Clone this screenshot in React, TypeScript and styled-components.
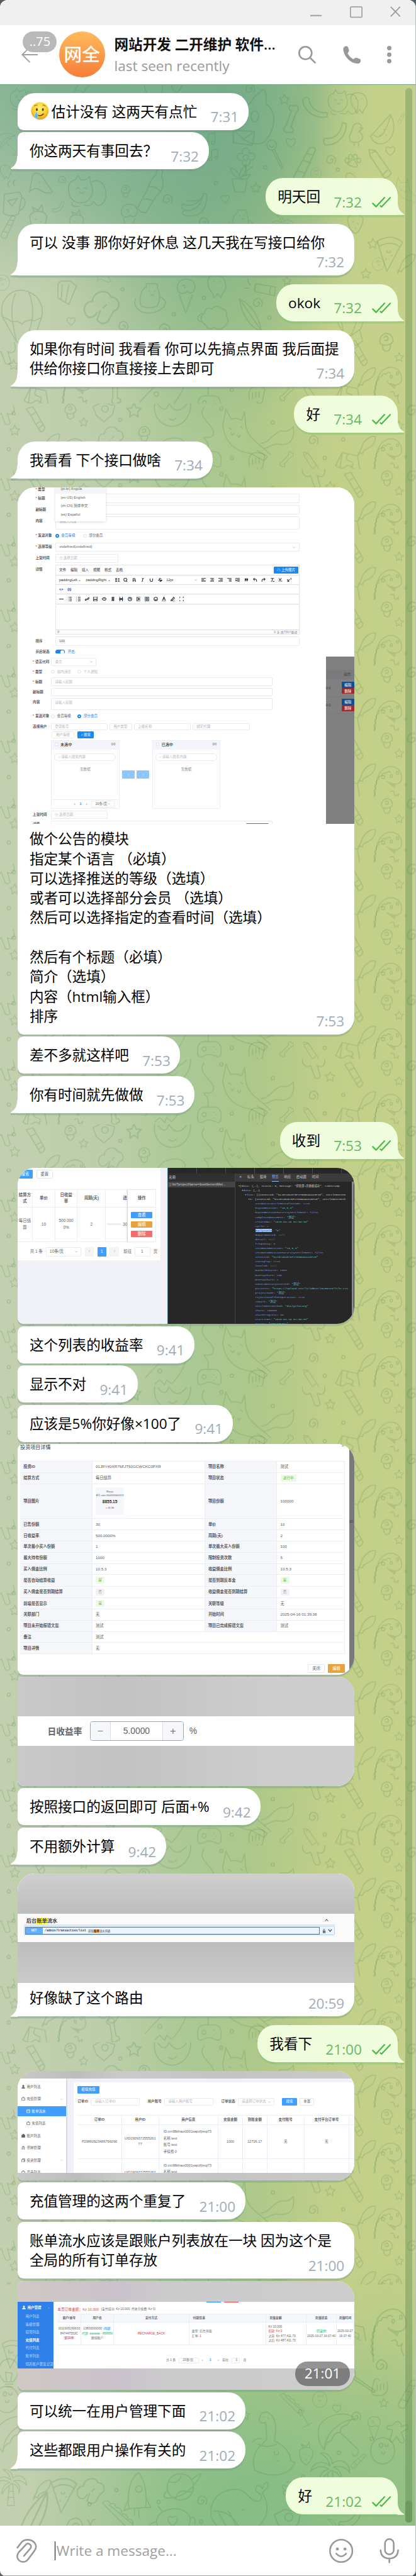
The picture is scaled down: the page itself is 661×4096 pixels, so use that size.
import React from 'react';
import styled, { createGlobalStyle, css } from 'styled-components';

const Global = createGlobalStyle`
  html, body { margin: 0; padding: 0; background: #545c64; }
  * { box-sizing: border-box; }
`;

const SANS = `'Open Sans', 'Noto Sans CJK SC', sans-serif`;
const UI = `'Liberation Sans', 'Noto Sans CJK SC', sans-serif`;
const MONO = `'Liberation Mono', 'Noto Sans CJK SC', monospace`;

/* ---------- window ---------- */

const Viewport = styled.div`
  width: 661px;
  height: 4096px;
  overflow: hidden;
`;

const Window = styled.div`
  zoom: 0.868594;
  width: 761px;
  height: 4716px;
  display: flex;
  flex-direction: column;
  overflow: hidden;
  border-radius: 14px 14px 10px 10px;
  border-right: 1px solid #b9bdb9;
  background: #fff;
  font-family: ${SANS};
  color: #000;
`;

const TitleBar = styled.div`
  flex: none;
  height: 46px;
  padding: 12px 27px 0 0;
  display: flex;
  justify-content: flex-end;
  gap: 51px;
  background: #f0f0f0;
`;

const Header = styled.header`
  flex: none;
  height: 108px;
  display: flex;
  align-items: center;
  padding: 0 44px 0 39px;
`;

const BackSlot = styled.div`
  position: relative;
  width: 69px;
  height: 84px;
  display: flex;
  align-items: center;
`;

const UnreadBadge = styled.span`
  position: absolute;
  left: 3px;
  top: 0;
  width: 62px;
  height: 38px;
  border-radius: 19px;
  background: #b9b9b9;
  color: #fff;
  font-size: 23px;
  line-height: 37px;
  text-align: center;
`;

const Avatar = styled.div`
  width: 84px;
  height: 84px;
  border-radius: 50%;
  background: linear-gradient(#ffba5c, #f67d38);
  color: #fff;
  font-size: 33px;
  font-weight: 500;
  line-height: 84px;
  text-align: center;
`;

const Peer = styled.div`
  flex: 1;
  margin-left: 17px;
  white-space: nowrap;
`;

const PeerName = styled.div`
  font-size: 26px;
  font-weight: 600;
  line-height: 36px;
  margin-top: 2px;
  color: #111;
`;

const PeerStatus = styled.div`
  font-size: 26px;
  line-height: 36px;
  margin-top: 4px;
  color: #999;
`;

const HeaderIcons = styled.div`
  display: flex;
  align-items: center;
  gap: 48px;
`;

const Composer = styled.footer`
  flex: none;
  height: 92px;
  display: flex;
  align-items: center;
  padding: 0 30px 0 30px;
  border-bottom: 1px solid #a5a5a5;
`;

const Placeholder = styled.div`
  flex: 1;
  margin-left: 32px;
  padding-left: 2px;
  border-left: 2px solid #000;
  height: 35px;
  line-height: 34px;
  font-size: 26px;
  color: #a0a0a0;
`;

/* ---------- chat ---------- */

const Chat = styled.main`
  position: relative;
  flex: 1;
  overflow: hidden;
  border-top: 1px solid #6ea57a;
  background:
    radial-gradient(ellipse 420px 420px at 470px 100%, rgba(136, 189, 133, 1) 20%, rgba(136, 189, 133, 0) 100%),
    radial-gradient(ellipse 300px 500px at 760px 100%, rgba(146, 190, 130, 0.9) 0%, rgba(146, 190, 130, 0) 100%),
    linear-gradient(90deg, rgba(197, 209, 139, 0) 76%, rgba(197, 209, 139, 1) 94%) 0 0 / 100% 700px no-repeat,
    radial-gradient(ellipse 500px 380px at 140px 0, rgba(122, 174, 142, 0.95) 10%, rgba(122, 174, 142, 0) 100%),
    radial-gradient(ellipse 330px 640px at 380px 0, rgba(113, 170, 131, 1) 10%, rgba(113, 170, 131, 0) 100%),
    linear-gradient(90deg, #c3d0b0 0%, #bccea9 26%, #aac894 46%, #aec88a 62%, #c2cf89 80%, #c5d18a 100%);
`;

const Wallpaper = styled.svg`
  position: absolute;
  inset: 0;
  fill: none;
  stroke: rgba(70, 125, 70, 0.2);
  stroke-width: 2;
  stroke-linecap: round;
  stroke-linejoin: round;
`;

const Track = styled.div`
  position: absolute;
  right: 6px;
  top: 6px;
  bottom: 6px;
  width: 12px;
  border-radius: 6px;
  background: rgba(78, 122, 66, 0.32);
  display: flex;
  align-items: flex-end;
`;

const Thumb = styled.div`
  width: 12px;
  height: 40px;
  border-radius: 6px;
  background: #6c9a5d;
`;

const History = styled.div`
  position: relative;
  display: flex;
  flex-direction: column;
  gap: 16px;
  padding: 15px 32px 0;
`;

const Group = styled.section<{ $out?: boolean }>`
  display: flex;
  flex-direction: column;
  gap: 4px;
  align-items: ${p => (p.$out ? 'flex-end' : 'flex-start')};
`;

type Shape = { $out?: boolean; $first?: boolean; $last?: boolean };

const corners = css<Shape>`
  border-radius: ${p =>
    p.$out ? '32px 32px 0 32px' : `${p.$first ? 32 : 11}px 32px 32px ${p.$last ? 0 : 11}px`};
`;

const Bubble = styled.article<Shape & { $wide?: boolean }>`
  position: relative;
  display: flex;
  flex-direction: ${p => (p.$wide ? 'column' : 'row')};
  width: ${p => (p.$wide ? '616px' : 'auto')};
  background: ${p => (p.$out ? '#effddd' : '#fff')};
  box-shadow: 0 4px 0 ${p => (p.$out ? 'rgba(120, 195, 110, 0.4)' : 'rgba(110, 150, 135, 0.35)')};
  ${corners}
`;

const TailSvg = styled.svg<{ $out?: boolean }>`
  position: absolute;
  bottom: -4px;
  ${p => (p.$out ? 'right: -12px; transform: scaleX(-1);' : 'left: -12px;')}
`;

const Body = styled.div<{ $caption?: boolean }>`
  padding: ${p => (p.$caption ? '10px' : '16px')} 22px 16px;
  font-size: 26px;
  line-height: 36px;
  white-space: pre;
`;

/* the time sits on the last text line ($lift) or on a line of its own ($drop) */
const Meta = styled.div<{ $out?: boolean; $lift?: boolean; $drop?: boolean }>`
  flex: none;
  display: flex;
  align-items: center;
  align-self: flex-end;
  height: 36px;
  line-height: 36px;
  margin: ${p => (p.$lift ? '-42px' : p.$drop ? '-16px' : 'auto')} ${p => (p.$out ? 13 : 18)}px 6px 2.5px;
  gap: 18px;
  font-size: 26px;
  color: ${p => (p.$out ? '#68b966' : '#a0acb6')};
`;

const Photo = styled.figure<Shape & { $h: number; $inset?: boolean }>`
  position: relative;
  flex: none;
  margin: 0;
  width: 616px;
  height: ${p => p.$h}px;
  overflow: hidden;
  font-family: ${UI};
  font-size: 6.4px;
  color: #606266;
  background: #fff;
  white-space: nowrap;
  ${p =>
    p.$inset
      ? css`border-radius: ${p.$first ? '32px 32px 0 0' : '0'};`
      : css<Shape>`
          ${corners}
        `}
`;

const PhotoShell = styled.div<Shape>`
  box-shadow: 0 4px 0 rgba(110, 150, 135, 0.35);
  ${corners}
`;

const PhotoTime = styled.span`
  position: absolute;
  right: 8px;
  bottom: 8px;
  width: 100px;
  height: 44px;
  border-radius: 22px;
  background: rgba(60, 60, 60, 0.55);
  color: #fff;
  font-family: ${SANS};
  font-size: 26px;
  line-height: 43px;
  text-align: center;
`;

const Tail = ({ out }: { out?: boolean }) => (
  <TailSvg $out={out} width="13" height="28" viewBox="0 0 13 28">
    <path d="M0 22H13V28H0Z" fill={out ? 'rgba(120,195,110,.4)' : 'rgba(110,150,135,.35)'} />
    <path d="M13 0H12C12 11 8 18 0 22.500V24H13Z" fill={out ? '#effddd' : '#fff'} />
  </TailSvg>
);

const Ticks = () => (
  <svg width="35" height="20" viewBox="0 0 35 20" fill="none" stroke="#4fb94b" strokeWidth="2.600" strokeLinecap="round" strokeLinejoin="round">
    <path d="M1.500 12L7.500 18L23 1.500M15.500 16.500L17.500 18.500L33.500 1.500" />
  </svg>
);

const EmojiFace = styled.svg`
  vertical-align: -6px;
  margin: 0 4px 0 3px;
`;

const Emoji = () => (
  <EmojiFace width="33" height="33" viewBox="0 0 33 33">
    <defs>
      <radialGradient id="face" cx=".5" cy=".35" r=".65">
        <stop offset="0" stopColor="#fff27a" />
        <stop offset=".6" stopColor="#fbd12e" />
        <stop offset="1" stopColor="#ec9a1c" />
      </radialGradient>
    </defs>
    <circle cx="16.500" cy="16.500" r="16" fill="url(#face)" />
    <path d="M6 8Q9 5 12 6M21 6Q24 5 27 8" stroke="#a5670f" strokeWidth="1.300" fill="none" />
    <ellipse cx="11" cy="14" rx="1.700" ry="2.600" fill="#5f3a0c" />
    <ellipse cx="22" cy="14" rx="1.700" ry="2.600" fill="#5f3a0c" />
    <path d="M11 23Q17 28 23 22" stroke="#5f3a0c" strokeWidth="1.700" fill="none" strokeLinecap="round" />
    <path d="M10 17Q14 24 13 28Q11 31 8 30Q5 28 7 24Z" fill="#5db8ee" stroke="#d6f1ff" strokeWidth=".6" />
  </EmojiFace>
);

type MsgProps = {
  time: string;
  out?: boolean;
  first?: boolean;
  last?: boolean;
  wide?: boolean;
  wrapTime?: boolean;
  media?: React.ReactNode;
  children: React.ReactNode;
};

const Message = ({ time, out, first, last, wide, wrapTime, media, children }: MsgProps) => (
  <Bubble $out={out} $first={first} $last={last} $wide={wide}>
    {(last || out) && <Tail out={out} />}
    {media}
    <Body $caption={!!media}>{children}</Body>
    <Meta $out={out} $lift={wide && !wrapTime} $drop={wrapTime}>
      {time}
      {out && <Ticks />}
    </Meta>
  </Bubble>
);

/* ---------- wallpaper doodles ---------- */

const shapes: Record<string, React.ReactNode> = {
  star: <path d="M0-10L3-3 10-2 5 3 6 10 0 6-6 10-5 3-10-2-3-3Z" />,
  heart: <path d="M0 10C-15 0-9-13 0-5 9-13 15 0 0 10Z" />,
  dot: <circle r="3" />,
  spiral: <path d="M0 1c2-4 6 0 3 4s-10 3-10-3 5-11 11-8 6 10 3 14" />,
  bone: <path d="M-3-11C-10-11-9-20-3-18 0-23 9-18 4-11L4 11C11 12 10 19 5 18 1 23-8 19-3 11Z" />,
  fish: <path d="M-14 14C-8 10-10 2-4-5 2-13 12-18 17-15 17-6 12 2 4 6-2 9-6 9-7 16L-11 14-15 19Z" />,
  dino: (
    <>
      <path d="M-24 56C-27 20-24-10-8-20 8-30 24-22 26-4 27 8 16 13 4 7M-2 4Q6 14 14 10L12 16 7 11M4 24Q12 20 12 28T20 28Q16 36 22 46" />
      <path d="M-24 46q-6-4-1-9-5-5 0-9-5-5 1-10-4-6 2-9-3-6 4-9-1-7 6-7 1-7 8-4 3-6 9-2" />
      <ellipse cx="6" cy="-6" rx="2" ry="3" /><ellipse cx="18" cy="-12" rx="2" ry="3" />
    </>
  ),
  mushroom: <path d="M-10 2C-12-16 10-18 10 0 6 6-6 7-10 2ZM-6 5C-8 18 8 18 6 4M-4-6q4-5 6 0t-5 4" />,
  torch: <path d="M-16-20L-4-24 2-14-8-8ZM-8-8L10 22Q16 22 18 14L2-14M2 8L10 3M6 16L14 10" />,
  tree: <path d="M-20-20C-24-4-14 4-6-2L2 20Q8 24 12 18L6-2C16 4 24-4 18-18" />,
  broccoli: <path d="M-18 12C-28 2-20-10-12-8-12-22 8-26 12-14 24-14 26 2 16 4L8 18Q0 24-6 16L-2 4M-18 12Q-10 14-6 6M2 0l4-4" />,
  cat: (
    <>
      <path d="M-24-42L-14-22Q-4-26 6-20L12-36 14-12C16 10 34 22 44 30L62 46M-24-42L-30-10C-26 20-10 40 24 44L50 58 56 50 36 38M-14 4l3 5 3-5M-2 8l3 5 3-5M-18-6l4 3M4-8l4 3" />
      <path d="M44 24C60 24 66 4 84 0Q96 4 106-8C110 20 96 30 76 26 66 24 62 32 50 34" />
    </>
  ),
  pad: <path d="M-10-60C-26-40 10-26 8-10S-18-8-8 2-4 18-2 26M-22 52C-26 26-14 24 0 26 14 24 26 26 22 52 16 60 10 50 0 50-10 50-16 60-22 52ZM-14 40a4 4 0 108 0 4 4 0 10-8 0M8 36h1M13 41h1M8 46h1" />,
  hook: <path d="M-14 10Q-18-14 0-14 16-14 14-6T10 14Q4 20 0 14M-8 8V-2M-2 6V-4M4 6V-4" />,
  carton: <path d="M-20 12L-8-12 20-6 24 18M-8-12L-12 16M-20 12Q-8 20-2 14T14 18M2-8Q-4 2 6 4T8 16" />,
  pencil: <path d="M-16-20L-6-18 18 16Q16 22 8 24L-14-10ZM-12-14L-6-18M4 20L12 12" />,
  girl: <path d="M-32 0C-36 26-18 42 0 42S34 26 34 0M-26 2Q-12 20-6 0Q8 24 26 2M-6 28Q2 34 8 26" />,
  camera: <path d="M-20-6L-4-14 20-8 16 8 0 22-14 10ZM-4-2a6 6 0 1012 0 6 6 0 10-12 0" />,
  wing: <path d="M-44 20L-6-20Q30-34 38-12 30 12 10 32L0 24-4 34-14 24-24 32M-18 6a4 4 0 108 0 4 4 0 10-8 0" />,
  note: <path d="M-6 12V-10L8-14V8M-6 12a4 3 0 11-1-4M8 8a4 3 0 11-1-4" />,
  flower: <path d="M0-4a5 5 0 11-1 0M-6-6C-12-18 8-22 6-6 20-12 20 8 7 5 10 20-10 20-6 6-20 10-20-12-6-6M0 12V34M0 26Q10 20 12 16" />,
  pot: <path d="M-14-4H14L10 20H-8ZM0-4C-14-10-16-20-16-24-6-22 0-14 0-4 0-16 4-24 12-28 12-16 6-8 0-4 8-12 16-12 20-12 16-2 8-2 0-4" />,
  melon: <path d="M-22 12L14-28C28-4 18 26-6 26Q-18 24-22 12ZM-16 10Q0 24 14-24M2 0h1M6 10h1M-6 10h1" />,
  bottle: <path d="M12-42L20-40 18-26Q26-8 8 8L-8 34Q-18 36-22 26L-6-4Q0-22 8-28ZM-4-8Q8-12 16 0M-12 12Q-4 10 4 16" />,
  banana: <path d="M18-22L24-20C26 10 8 26-18 18-22 14-20 10-16 10 6 12 16-4 18-22ZM18-18C8 0-8 4-20-2L-22 4Q-18 10-12 10M14-10Q2-6-12-8" />,
  catface: <path d="M-24 6C-28-16-14-18-12-18L-8-26-2-18H6L14-24 16-12C26 8 12 24-2 24-14 24-22 16-24 6ZM18-14C40-26 50 8 40 22Q30 36 22 22M-10-2q3-4 5 0M4-2q3-4 5 0M-4 4q4 5 8 0M-18 24q-2 8 12 6M4 28q14 4 16-6" />,
  mug: <path d="M-16-14L12-18 16-10 10 22Q-8 30-18 20ZM15-8Q26-4 20 8T11 12M-10-2L8-6-2 8ZM-8-28q-4-6 2-10M2-30q-4-6 2-10" />,
  onigiri: <path d="M-20 16L-14-16Q-6-22 2-14L22 16Q10 22-4 10-14 8-20 16ZM-10-6h1M-2-2h1" />,
  alien: <path d="M8-40Q14-50 18-38L18-22C36-8 34 20 14 40Q-8 46-22 30M-30-6Q-24-20-8-22L0-34 8-40M-6-2a6 9 0 1012 0 6 9 0 10-12 0M-34 20L0 22-4 44-34 40ZM-34 20L-18 34 0 22" />,
  icecream: <path d="M-14-4C-20-16-10-28 2-26 16-26 20-12 14-4Q8 2 2-4-6 4-14-4ZM-12 2L0 36 12 2M-6-14q6-4 4 4" />,
  sheep: <path d="M-20 8Q-26-2-16-8-14-20-2-16 6-26 16-16 28-14 24-2 32 8 22 14 14 26 2 18-8 24-12 16ZM-20 8Q-30 6-28-2L-20-8M-22 0h1" />,
  balloon: <path d="M-38-6C-44-36-22-56 0-54 26-50 40-28 34-4L22 30 2 44-12 40ZM-14-48C-26-20-18 10-12 40M10-52C24-20 18 10 2 44M-38-6Q-28-2-20 4-10 0-2 8 8-2 20 2L34-4M-4 46L12 64 26 54 20 32" />,
  popcorn: <path d="M-16-20Q-12-30-2-26 8-30 12-22L18-18 4 16-16 4ZM-8-20L-10 6M4-20L-2 12" />,
  bear: <path d="M-26 4Q-32 18-14 28 10 34 26 18 34 6 18 0M-16 16C-22-6-10-18-6-18Q-8-26-2-24L8-24Q16-26 14-16 22 0 14 16 0 24-16 16ZM-2-10h1M8-10h1M2-4q3 3 5 0" />,
  feather: <path d="M-16-28C4-20 20 4 24 30 4 26-12 0-16-28ZM-16-28L24 30" />,
  firework: <path d="M-16-8L20-2 18 14-18 6ZM-16-8Q-20 0-18 6M12-4Q8 4 10 12M-26-6q-6-4-4-10M-30 0h-6" />,
  octo: <path d="M-16-12C-14-26 14-26 16-8Q20 4 12 10L8 20 2 12-4 20-8 10Q-16 4-16-12ZM-6-10h1M6-10h1" />,
  paw: <path d="M-6 6Q0-4 6 6T0 12-6 6ZM-10-2a3 4 0 101 0M-4-8a3 4 0 101 0M4-8a3 4 0 101 0M10-2a3 4 0 101 0" />,
  duck: <path d="M-4-16a8 8 0 1110 10Q16-2 12 8 4 16-8 12-14 4-8-4ZM8-14L14-12 8-9M-2 14V20M6 14V20" />,
  ribbon: <path d="M-14 18C0 20 18 8 18-14L12-16C10 2-2 10-14 8Q-20 12-14 18Z" />,
  candle: <path d="M-16 20L8-24Q14-28 18-22L-4 26Q-12 28-16 20ZM-10 10L2 14M-2-6L10-2M4-16L14-14" />,
  lolly: <path d="M-12-12a9 9 0 1018 0 9 9 0 10-18 0M-7-12a4 4 0 108 0M2-4L18 30 15 31-2-3" />,
  umbrella: <path d="M-36-20C-20-46 20-50 34-34Q22-34 18-22 6-22 4-8-8-8-12 8-24 10-26 26-42 8-36-20ZM34-34C16-34-24-16-26 26M4-8L38 24Q42 30 36 36T28 32" />,
  whale: <path d="M-50 20C-54-20-20-34 4-28 20-22 24-4 38-8 48-14 40-22 32-26 30-38 40-40 44-30 46-44 56-46 54-34 50-28 44-26 44-22 58 0 54 26 34 40 4 56-40 52-50 20ZM-46 10Q-10 10 4 46M-36 14Q-22 38-20 44M6 8h4M-18 11Q-4 34-2 46" />,
  nessie: <path d="M-32 40C-44 0-10-8-10-20L-12-48Q-22-44-24-52-22-70-8-66 8-58 6-30L4-14C22-6 34 10 34 22L42 26 34 38Q8 58-32 40ZM-36-12Q-30-20-20-18M-26-8Q-10 0 8-8M-16-58h1M-8-56h1M4 6a4 4 0 107 0M10 22h1" />,
  palm: <path d="M0-8C-20-24-34-8-36 2-24-10-10-8-2-2-16 0-22 14-20 24-14 10-4 4 2 0 14 2 20 12 18 22 26 8 14-4 6-6 22-10 30-4 36 4 34-20 14-22 4-12 4-26-8-34-18-32-8-26-2-18 0-8ZM-4 4L-8 50H8L4 2M-6 18H5M-7 32H6" />,
  ginger: <path d="M-6-14a7 7 0 1114 4L18-14Q24-8 16-4L8 0 14 16Q10 24 4 16L0 8-8 18Q-16 16-10 6L-8-4-18-6Q-20-14-10-12Z" />,
  rocket: <path d="M-14 26C-20-8-8-34 4-40 16-24 20 4 16 24ZM-2-10a6 6 0 1012 0 6 6 0 10-12 0M-14 6L-24 30-14 26M16 4L26 24 16 24M-4 26V38M4 26V42" />,
  planet: <path d="M-24 0a24 24 0 1048 0 24 24 0 10-48 0M-22-10Q-4-2 2-22M-8 22Q-6 4 10 8T23 4M-24 6Q-40 24-14 20T30-10 22-14" />,
  snail: <path d="M-30 24Q0 34 28 20M-16 20C-24 0-4-14 8-2 16 10 4 24-6 16-14 6 0-2 4 6M10 22L26 6Q28-6 34-4M26 6L20-4" />,
  turtle: <path d="M-30 0C-28-26 20-34 32-8 36 18-4 34-24 18ZM0 8C-14-4-8-14 0-8 8-14 14-4 0 8ZM-30 0Q-46 4-42 12T-24 18M32-8Q44-10 40 4M-20-20l-6-8M20 20l8 8" />,
  cone: <path d="M-34-34L20 20M-20-30L28 10M-34-34Q-24-44-18-32-8-36-6-24 4-26 6-12 16-12 18-2 30 0 28 10L20 20M24 16L40 44 26 50M40 44L50 38" />,
  bulb: <path d="M-8 20C-28-2-14-24 2-22 20-20 22 4 8 20ZM-6 24H8M-4 29H6M-4 18L-6 2 6 4 4 18M-24-22l-5-6M0-32v-7M24-20l5-5" />,
  pizza: <path d="M-20-18Q4-32 22-16L-4 32ZM-16-10Q4-20 18-8M-4-2a3 3 0 106 0M4 6h1M-6 12h1" />,
  ball: <path d="M-22 0a22 24 0 1044 0 22 24 0 10-44 0M-6-10a3 4 0 106 0 3 4 0 10-6 0M4-12a3 4 0 106 0M-2 2a3 4 0 106 0" />,
  strawberry: <path d="M-14-6C-8-16 8-16 14-6 14 8 6 20 0 22-8 18-14 8-14-6ZM-6-12L-10-20 0-15 6-24 8-12M-5 0h1M4 4h1M0 12h1" />,
};

type Doodle = [string, number, number, number?, number?];

const band: Doodle[] = [
  ['torch', 64, 30], ['camera', 190, 12], ['star', 245, 12, 1.3], ['star', 153, 34, 0.8], ['star', 27, 49, 0.9],
  ['girl', 315, 0], ['broccoli', 203, 64], ['mushroom', 264, 55, 1], ['fish', 92, 72], ['dino', 132, 88, 0.95],
  ['wing', 305, 86, 0.9], ['cat', 436, 50, 0.95], ['pad', 383, 64, 0.95], ['bone', 524, 102, 0.8, 45],
  ['hook', 470, 104], ['pencil', 568, 105, 0.8], ['carton', 634, 102], ['star', 604, 32, 0.9], ['spiral', 573, 66],
  ['torch', 646, 30], ['tree', 574, 14], ['mushroom', 708, 16, 1], ['star', 730, 40, 0.8], ['fish', 670, 76],
  ['dino', 710, 88, 0.95], ['spiral', 754, 12, 1.2], ['mushroom', 129, 14], ['tree', 8, 20, 0.9], ['dot', 220, 30],
  ['dot', 499, 35], ['dot', 424, 100], ['dot', 594, 100], ['dot', 16, 84], ['dot', 701, 84], ['dot', 25, 18],
  ['dot', 628, 66], ['dot', 405, 10], ['dot', 742, 98, 0.7], ['carton', 62, 104], ['bone', 206, 98, 1.1, -10],
];

const upper: Doodle[] = [
  ['ribbon', 70, 96, 1], ['catface', 36, 24, 0.7], ['bottle', 150, 0, 0.9], ['heart', 323, 4, 1], ['octo', 280, 8],
  ['spiral', 457, 6], ['alien', 466, 60, 1.15], ['star', 520, 26, 0.9], ['ribbon', 578, 40, 1.2, 80], ['bone', 532, 62, 1.3, 20],
  ['catface', 620, 30, 0.8], ['octo', 656, 34, 0.9], ['melon', 700, 82, 1], ['duck', 650, 92, 1], ['ribbon', 612, 88, 1.2],
  ['note', 386, 100, 0.9], ['note', 392, 128, 0.8], ['heart', 532, 105, 0.9], ['flower', 450, 132, 1], ['lolly', 500, 122, 1],
  ['candle', 556, 145, 1.2], ['spiral', 605, 136], ['paw', 645, 136, 1.1], ['pencil', 694, 142, 1.2], ['heart', 714, 120, 0.9],
  ['pot', 438, 176, 1], ['bottle', 276, 196, 1.1], ['catface', 150, 192, 1], ['onigiri', 74, 180, 1], ['mug', 24, 214, 1],
  ['spiral', 113, 173, 0.8], ['mushroom', 230, 194, 0.8], ['banana', 354, 220, 1], ['heart', 412, 208, 0.8], ['star', 468, 188, 0.9],
  ['dot', 395, 180], ['dot', 485, 151], ['dot', 618, 155], ['spiral', 306, 208, 1], ['ball', 578, 162, 0.45], ['strawberry', 70, 246, 1.1],
  ['strawberry', 140, 250, 0.9], ['strawberry', 650, 250, 1], ['onigiri', 645, 176, 0.8], ['cat', 740, 190, 0.5], ['icecream', 236, 242, 0.9],
  ['bear', 440, 248, 0.8], ['spiral', 372, 250], ['ribbon', 106, 222, 0.6], ['palm', 516, 258, 0.6], ['candle', 14, 260, 0.8],
  ['feather', 340, 130, 0.9, 190], ['umbrella', 10, 110, 0.5], ['octo', 10, 160, 0.6], ['candle', 734, 60, 0.4],
  ['star', 682, 290, 0.9], ['pizza', 712, 306, 1.1], ['ball', 692, 328, 0.5], ['star', 669, 345, 0.9], ['fish', 742, 326],
  ['balloon', 42, 430, 1], ['popcorn', 122, 386, 1], ['broccoli', 186, 408, 1.4], ['bear', 274, 388, 1], ['icecream', 340, 382, 1],
  ['octo', 396, 370, 1], ['firework', 484, 372, 1], ['star', 525, 358, 0.8], ['feather', 454, 420, 1], ['sheep', 390, 426, 1],
  ['spiral', 471, 398], ['spiral', 225, 440], ['heart', 130, 432, 0.8], ['dot', 224, 374], ['dot', 373, 390], ['dot', 318, 420],
  ['dot', 493, 426], ['spiral', 300, 446, 1.2], ['balloon', 640, 420, 0.9], ['mushroom', 707, 470, 1.2], ['star', 730, 498, 0.8],
  ['torch', 654, 492, 1], ['fish', 670, 534], ['dino', 710, 540, 0.95], ['star', 25, 512, 0.9], ['tree', 8, 490], ['carton', 64, 566],
  ['dino', 140, 550, 0.95], ['bone', 210, 560, 1.2], ['wing', 300, 560, 1], ['pad', 383, 546, 0.9], ['bone', 524, 564, 0.8, 45],
  ['hook', 470, 566], ['carton', 634, 562], ['pencil', 568, 566, 0.8], ['dot', 424, 558], ['ball', 4, 362, 0.6], ['onigiri', 190, 350, 0.6],
];

const lower: Doodle[] = [
  ['dino', 712, 80, 1.2], ['spiral', 697, 152, 1.2], ['carton', 645, 90, 1], ['hook', 694, 195, 1, 180], ['ball', 585, 216, 0.6],
  ['lolly', 650, 180, 1.2, -30], ['star', 702, 222, 0.8], ['candle', 744, 206, 1], ['spiral', 651, 246], ['heart', 616, 232, 0.8],
  ['icecream', 684, 266, 0.7], ['ginger', 726, 276, 1], ['umbrella', 618, 284, 0.95], ['ball', 700, 310, 1], ['nessie', 498, 306, 1],
  ['strawberry', 560, 316, 0.9], ['palm', 604, 346, 1], ['candle', 655, 328, 0.6, 20], ['cone', 536, 232, 0.7], ['dot', 549, 238],
  ['dot', 620, 314], ['dot', 680, 288], ['pizza', 696, 384, 0.9], ['fish', 646, 392, 0.8], ['ball', 12, 216, 1], ['bulb', 16, 164, 1],
  ['umbrella', 30, 288, 0.95], ['pizza', 22, 130, 0.9], ['palm', 20, 370, 0.8], ['fish', 76, 380, 1], ['pizza', 116, 388, 1.1],
  ['broccoli', 166, 384, 1.1], ['rocket', 250, 390, 1], ['planet', 330, 376, 1], ['whale', 436, 410, 1], ['banana', 536, 374, 0.9],
  ['spiral', 369, 400], ['cone', 218, 436, 0.9], ['turtle', 316, 440, 1], ['snail', 140, 440, 1], ['feather', 60, 430, 1.6, 60],
  ['strawberry', 194, 472, 1], ['camera', 526, 434, 1.2], ['ribbon', 640, 430, 1.2], ['dot', 164, 408], ['dot', 368, 440],
  ['dot', 290, 404], ['dot', 213, 382], ['ball', 472, 470, 0.8], ['palm', 612, 458, 0.7], ['star', 448, 244, 0.9], ['snail', 560, 456, 0.6],
];

const Doodles = ({ items }: { items: Doodle[] }) => (
  <>
    {items.map(([name, x, y, s = 1, r = 0], i) => (
      <g key={i} transform={`translate(${x} ${y}) rotate(${r}) scale(${s})`}>{shapes[name]}</g>
    ))}
  </>
);

const ChatWallpaper = () => (
  <Wallpaper width="761" height="4470" viewBox="0 0 761 4470">
    <defs>
      <pattern id="band" width="761" height="120" patternUnits="userSpaceOnUse" y="583">
        <Doodles items={band} />
      </pattern>
    </defs>
    <svg width="761" height="583"><Doodles items={upper} /></svg>
    <rect y="583" width="761" height="3444" fill="url(#band)" stroke="none" />
    <svg y="4021" width="761" height="450"><Doodles items={lower} /></svg>
  </Wallpaper>
);

/* ---------- shared pieces of the attached admin screens ---------- */

const Col = styled.div<{ $pad?: string; $w?: number; $bg?: string }>`
  display: flex;
  flex-direction: column;
  padding: ${p => p.$pad || 0};
  width: ${p => (p.$w ? `${p.$w}px` : 'auto')};
  background: ${p => p.$bg || 'transparent'};
`;

const Line = styled.div<{ $h: number; $gap?: number; $mb?: number; $ml?: number; $top?: boolean }>`
  flex: none;
  display: flex;
  align-items: ${p => (p.$top ? 'flex-start' : 'center')};
  height: ${p => p.$h}px;
  line-height: 8px;
  gap: ${p => p.$gap || 0}px;
  margin-bottom: ${p => p.$mb || 0}px;
  margin-left: ${p => p.$ml || 0}px;
`;

const Label = styled.div<{ $w: number; $req?: boolean; $mt?: number }>`
  flex: none;
  width: ${p => p.$w}px;
  margin-top: ${p => p.$mt || 0}px;
  font-weight: 700;
  color: #55585d;
  &::before {
    content: '*';
    display: ${p => (p.$req ? 'inline' : 'none')};
    color: #f04848;
    margin-right: 2px;
  }
`;

const Box = styled.div<{ $w: number; $h?: number; $tall?: boolean; $pill?: boolean; $dark?: boolean }>`
  flex: none;
  width: ${p => p.$w}px;
  height: ${p => (p.$h ? `${p.$h}px` : '100%')};
  display: flex;
  align-items: ${p => (p.$tall ? 'flex-start' : 'center')};
  justify-content: space-between;
  padding: ${p => (p.$tall ? '4px 6px 0' : '0 6px')};
  border: 1px solid #e9eaee;
  border-radius: ${p => (p.$pill ? 8 : 1.5)}px;
  color: ${p => (p.$dark ? '#606266' : '#b4b7be')};
`;

const Btn = styled.div<{ $w: number; $h: number; $c?: string }>`
  flex: none;
  width: ${p => p.$w}px;
  height: ${p => p.$h}px;
  display: flex;
  align-items: center;
  justify-content: center;
  border-radius: 1.500px;
  color: ${p => (p.$c ? '#fff' : '#606266')};
  background: ${p => p.$c || '#fff'};
  border: ${p => (p.$c ? '0' : '1px solid #e4e6eb')};
`;

const Radio = styled.span<{ $on?: boolean }>`
  display: inline-block;
  width: 7px;
  height: 7px;
  border-radius: 50%;
  background: #fff;
  border: ${p => (p.$on ? '2.500px solid #1888f5' : '1px solid #dfe2e8')};
  margin-right: 4px;
`;

const Tint = styled.span<{ $c: string; $b?: boolean }>`
  color: ${p => p.$c};
  font-weight: ${p => (p.$b ? 700 : 400)};
`;

const Spacer = styled.i`
  flex: 1;
`;

const Chevron = ({ up, s = 5, c = '#b4b7be' }: { up?: boolean; s?: number; c?: string }) => (
  <svg width={s} height={s} viewBox="0 0 10 10" fill="none" stroke={c} strokeWidth="1.600">
    <path d={up ? 'M1 8L5 3L9 8' : 'M1 2.500L5 7.500L9 2.500'} />
  </svg>
);

/* ---------- notice form, first attachment ---------- */

const LanguageMenu = styled.div`
  position: absolute;
  left: 69px;
  top: -4px;
  width: 93px;
  height: 66px;
  background: #fff;
  box-shadow: 0 1px 5px rgba(0, 0, 0, 0.14);
  display: flex;
  flex-direction: column;
`;

const LanguageItem = styled.div<{ $on?: boolean }>`
  flex: none;
  height: 15.700px;
  line-height: 15.700px;
  padding-left: 10px;
  background: ${p => (p.$on ? '#f3f5f9' : '#fff')};
`;

const Editor = styled.div`
  width: 447px;
  height: 128px;
  border: 1px solid #e6e6e6;
  display: flex;
  flex-direction: column;
  color: #222f3e;
`;

const EditorBar = styled.div<{ $h: number }>`
  flex: none;
  height: ${p => p.$h}px;
  padding: 0 1px 0 6px;
  display: flex;
  align-items: center;
  gap: 8px;
  border-bottom: 1px solid #dcdcdc;
`;

const Tool = styled.svg`
  flex: none;
  width: 8px;
  height: 8px;
  margin-right: -0.300px;
  fill: none;
  stroke: #222f3e;
  stroke-width: 1.500;
`;

const toolA = [
  'M2 1V9M0 3L2 1 4 3M0 7L2 9 4 7M6 2H10M6 5H10M6 8H10', 'M1 4a3.500 3.500 0 107 0 3.500 3.500 0 10-7 0M7 7L10 10',
  'M2 1V9H6Q8 9 8 7T6 5H2M2 1H5Q7 1 7 3T5 5', 'M6 1L4 9M4 1H8M2 9H6', 'M2 1V5Q2 8 5 8T8 5V1M2 10H8', 'M8 2Q3 0 3 3T7 6 3 9M0 5H10',
];
const toolB = [
  'M0 1H10M0 4H6M0 7H10M0 10H6', 'M0 1H10M2 4H8M0 7H10M2 10H8', 'M0 1H10M4 4H10M0 7H10M4 10H10', 'M0 1H10M4 4H10M4 7H10M0 10H10',
  'M0 1H10M4 4H10M4 7H10M0 10H10M0 4L3 5.500 0 7', 'M2 2V5H4V2ZM6 2V5H8V2ZM3 6L2 8M7 6L6 8', 'M4 0L1 3 4 6M1 3H6Q9 4 8 9',
  'M6 0L9 3 6 6M9 3H4Q1 4 2 9', 'M2 1H9M6 1L4 8M0 9H5M7 7L10 10M10 7L7 10', 'M0 1L6 8M6 1L0 8M8 7H10V10H8', 'M0 3L6 10M6 3L0 10M8 0H10V3H8',
];
const toolC = [
  'M0 5H10', 'M0 1H1M3 1H10M0 5H1M3 5H10M0 9H1M3 9H10', 'M0 1H1M4 1H10M0 5H1M4 5H10M0 9H1M4 9H10', 'M4 6L8 2Q10 1 9 4L6 7M6 4L2 8Q0 9 1 6L3 4',
  'M1 0H9V10H1ZM1 8L4 5 6 7 9 4', 'M0 5Q5-1 10 5 5 11 0 5ZM4 5H6', 'M3 0H7V9L5 7 3 9ZM5 1V7', 'M2 0V4H8V0M2 10V6H8V10M0 5H10', 'M1 5a4 4 0 108 0 4 4 0 10-8 0M5 2V5H7',
  'M1 0H9V10H1ZM4 3V7L7 5Z', 'M0 1H10V9H0ZM0 5H10M5 1V9', 'M1 5a4 4 0 108 0 4 4 0 10-8 0M3 6Q5 8 7 6', 'M2 8L5 0 8 8M3 5H7M0 10H10', 'M1 8L7 1 9 3 4 8ZM0 10H10',
  'M0 3V0H3M7 0H10V3M10 7V10H7M3 10H0V7',
];

const EditorStatus = styled.div`
  margin-top: auto;
  height: 9px;
  display: flex;
  justify-content: space-between;
  align-items: center;
  padding: 0 3px;
  border-top: 1px solid #dcdcdc;
  font-size: 5.800px;
  color: #7b828b;
`;

const Toggle = styled.span`
  width: 18px;
  height: 9px;
  border-radius: 5px;
  background: #1888f5;
  display: flex;
  justify-content: flex-end;
  padding: 1px;
  margin-right: 5px;
  &::after { content: ''; width: 7px; height: 7px; border-radius: 50%; background: #fff; }
`;

const LevelForm = () => (
  <Photo $inset $first $h={304}>
    <Col $pad="0 0 0 33px">
      <Line $h={8} $mb={4}><Label $w={36} $req>类型</Label></Line>
      <Line $h={16.7} $mb={4}><Label $w={36} $req>标题</Label><Box $w={447} /></Line>
      <Line $h={16.7} $mb={4}><Label $w={36}>副标题</Label><Box $w={447} /></Line>
      <Line $h={24} $mb={6} $top><Label $w={36} $mt={4}>内容</Label><Box $w={447} $tall>请输入内容</Box></Line>
      <Line $h={11} $mb={7}>
        <Label $w={36} $req>发送对象</Label><Radio $on /><Tint $c="#1888f5">会员等级</Tint>
        <Line $h={11} $ml={14}><Radio />部分会员</Line>
      </Line>
      <Line $h={16.7} $mb={4.3}><Label $w={36} $req>选择等级</Label><Box $w={447} $dark>undefined(undefined)<Chevron /></Box></Line>
      <Line $h={16} $mb={4}><Label $w={36}>上架时间</Label><Box $w={115}><span>◷ 选择日期</span></Box></Line>
      <Line $h={128} $mb={3} $top>
        <Label $w={36} $mt={4}>详情</Label>
        <Editor>
          <EditorBar $h={18}>
            <span>文件</span><span>编辑</span><span>插入</span><span>视图</span><span>格式</span><span>表格</span><Spacer />
            <Btn $w={45} $h={13} $c="#1888f5">☁ 上传图片</Btn>
          </EditorBar>
          <EditorBar $h={17.5}>
            <span>paddingLeft ⌄</span><span>paddingRight ⌄</span>
            {toolA.map(d => <Tool key={d} viewBox="0 0 10 10"><path d={d} /></Tool>)}
            <span>12pt</span><Spacer /><Chevron />
            {toolB.map((d, i) => <Tool key={i} viewBox="0 0 10 10"><path d={d} /></Tool>)}
            <Line $h={8} $ml={5} />
          </EditorBar>
          <EditorBar $h={17.5}><b>&lt;&gt;</b><b>{'{i}'}</b></EditorBar>
          <EditorBar $h={18}>
            {toolC.map(d => <Tool key={d} viewBox="0 0 10 10"><path d={d} /></Tool>)}
          </EditorBar>
          <EditorStatus><span>P</span><span>0 字 由TINY驱动</span></EditorStatus>
        </Editor>
      </Line>
      <Line $h={16.7} $mb={7}><Label $w={36}>排序</Label><Box $w={447} $dark>100</Box></Line>
      <Line $h={9}><Label $w={36}>开启状态</Label><Toggle /><Tint $c="#1888f5">开启</Tint></Line>
    </Col>
    <LanguageMenu>
      <LanguageItem $on>(pt-br) Angola</LanguageItem>
      <LanguageItem>(en-US) English</LanguageItem>
      <LanguageItem>(zh-CN) 简体中文</LanguageItem>
      <LanguageItem>(es) Español</LanguageItem>
    </LanguageMenu>
  </Photo>
);

/* ---------- notice form, second attachment ---------- */

const Split = styled.div<{ $h?: number }>`
  display: flex;
  height: ${p => (p.$h ? `${p.$h}px` : '100%')};
`;

const Panel = styled.div`
  width: 125px;
  height: 126px;
  border: 1px solid #eceef3;
  display: flex;
  flex-direction: column;
  align-items: center;
`;

const PanelHead = styled.div`
  width: 100%;
  height: 16px;
  margin-bottom: 7px;
  padding: 0 6px;
  display: flex;
  align-items: center;
  justify-content: space-between;
  background: #f4f5fa;
  font-size: 5.500px;
  b { font-size: 7px; font-weight: 500; color: #303133; }
  i { display: inline-block; width: 6px; height: 6px; margin-right: 4px; background: #fff; border: 1px solid #e3e5ea; }
`;

const Empty = styled.div`
  flex: 1;
  padding-top: 12px;
  color: #8c9096;
`;

const PanelFoot = styled.div`
  width: 100%;
  height: 17px;
  padding: 0 8px;
  display: flex;
  align-items: center;
  justify-content: flex-end;
  gap: 8px;
  border-top: 1px solid #eceef3;
`;

const Shade = styled.div`
  width: 52px;
  height: 306px;
  padding-top: 24px;
  background: #808080;
  color: #3d3e42;
`;

const ShadeRow = styled.div<{ $h: number; $head?: boolean }>`
  display: flex;
  align-items: center;
  justify-content: space-between;
  height: ${p => p.$h}px;
  padding: 0 ${p => (p.$head ? 6 : 0)}px 0 0;
  border-bottom: 1px solid #797a7c;
  background: ${p => (p.$head ? '#7a7b7e' : 'transparent')};
`;

const Stack = styled.div<{ $gap: number }>`
  display: flex;
  flex-direction: column;
  gap: ${p => p.$gap}px;
`;

const TransferPanel = ({ title, foot }: { title: string; foot?: boolean }) => (
  <Panel>
    <PanelHead><span><i /><b>{title}</b></span>0/0</PanelHead>
    <Box $w={113} $h={13.5} $pill><span>⌕ 请输入搜索内容</span></Box>
    <Empty>无数据</Empty>
    {foot && (
      <PanelFoot><span>‹</span><Tint $c="#1888f5" $b>1</Tint><span>›</span><Box $w={42} $h={12} $dark>20条/页<Chevron /></Box></PanelFoot>
    )}
  </Panel>
);

const MemberForm = () => (
  <Photo $inset $h={306}>
    <Split>
      <Col $pad="2px 0 0 28px" $w={564}>
        <Line $h={15} $mb={7}><Label $w={33.4} $req>语言代码</Label><Box $w={83}>语言<Chevron /></Box></Line>
        <Line $h={8} $mb={6.5}><Label $w={33.4} $req>类型</Label><Radio /><Tint $c="#b4b7be">站内消息</Tint><Line $h={8} $ml={12}><Radio /><Tint $c="#b4b7be">个人通知</Tint></Line></Line>
        <Line $h={15.3} $mb={3.5}><Label $w={33.4} $req>标题</Label><Box $w={405}>请输入标题</Box></Line>
        <Line $h={15.3} $mb={3.5}><Label $w={33.4}>副标题</Label><Box $w={405} /></Line>
        <Line $h={22} $mb={6} $top><Label $w={33.4} $mt={3}>内容</Label><Box $w={405} $tall>请输入标题</Box></Line>
        <Line $h={10} $mb={8}><Label $w={33.4} $req>发送对象</Label><Radio />会员等级<Line $h={10} $ml={12}><Radio $on /><Tint $c="#1888f5">部分会员</Tint></Line></Line>
        <Line $h={13.3} $mb={1.500} $gap={3}>
          <Label $w={30.4}>选择用户</Label><Box $w={104}>登录账号</Box><Box $w={42}>用户类型<Chevron /></Box><Box $w={104}>上级名称</Box><Box $w={105}>绑定代理</Box>
        </Line>
        <Line $h={13.3} $mb={3} $ml={35} $gap={6}><Box $w={41}>用户等级<Chevron /></Box><Btn $w={30} $h={13.3} $c="#1888f5">⌕ 搜索</Btn></Line>
        <Line $h={126} $mb={3} $ml={33.4} $gap={5}>
          <TransferPanel title="未选中" foot />
          <Line $h={15} $gap={4}><Btn $w={23} $h={15} $c="#8cc5ff">‹</Btn><Btn $w={23} $h={15} $c="#8cc5ff">›</Btn></Line>
          <TransferPanel title="已选中" />
        </Line>
        <Line $h={15} $mb={3.5}><Label $w={33.4}>上架时间</Label><Box $w={104}><span>◷ 选择日期</span></Box></Line>
        <Line $h={16} $top><Label $w={33.4} $mt={2}>详情</Label><Box $w={405} $h={16} $tall><i /><Btn $w={41} $h={12} $c="#1888f5">上传图片</Btn></Box></Line>
      </Col>
      <Shade>
        <ShadeRow $h={18} $head><i />操作</ShadeRow>
        {[0, 1].map(i => (
          <ShadeRow key={i} $h={31.5}>0:0<Stack $gap={0.500}><Btn $w={23} $h={11.3} $c="#0d4f91">编辑</Btn><Btn $w={23} $h={11} $c="#9b2b2e">删除</Btn></Stack></ShadeRow>
        ))}
      </Shade>
    </Split>
  </Photo>
);

/* ---------- list + network inspector attachment ---------- */

const ListPane = styled.div`
  flex: none;
  width: 275px;
  height: 100%;
  background: #eff1f6;
  border-right: 1px solid #4b6a80;
  font-size: 7.400px;
`;

const ListCard = styled.div`
  width: 262px;
  height: 169px;
  padding-top: 4px;
  background: #fff;
  border-radius: 0 0 3px 0;
`;

const Grid = styled.div<{ $cols: string; $rows: string; $w: number }>`
  display: grid;
  width: ${p => p.$w}px;
  grid-template-columns: ${p => p.$cols};
  grid-template-rows: ${p => p.$rows};
  border-top: 1px solid #ebeef5;
`;

const Cell = styled.div<{ $left?: boolean; $head?: boolean; $bg?: boolean; $span?: number; $shadow?: boolean }>`
  display: flex;
  flex-direction: ${p => (p.$left ? 'row' : 'column')};
  align-items: center;
  justify-content: ${p => (p.$left ? 'flex-start' : 'center')};
  text-align: center;
  padding: 0 ${p => (p.$left ? 6 : 0)}px;
  grid-column: span ${p => p.$span || 1};
  border-right: 1px solid #ebeef5;
  border-bottom: 1px solid #ebeef5;
  font-weight: ${p => (p.$head ? 700 : 400)};
  background: ${p => (p.$bg ? '#f5f7fb' : '#fff')};
  box-shadow: ${p => (p.$shadow ? '-2px 0 3px rgba(0,0,0,.1)' : 'none')};
  overflow: hidden;
  line-height: 1.62;
`;

const Progress = styled.span`
  display: flex;
  align-items: center;
  align-self: flex-end;
  gap: 3px;
  &::before { content: ''; width: 26px; height: 3px; border-radius: 2px; background: #ebeef5; }
`;

const Square = styled.span<{ $on?: boolean }>`
  width: 17px;
  height: 17px;
  line-height: 17px;
  text-align: center;
  border-radius: 1px;
  background: ${p => (p.$on ? '#409eff' : '#f4f4f5')};
  color: ${p => (p.$on ? '#fff' : '#b4b7be')};
`;

const DevTools = styled.div`
  flex: 1;
  display: flex;
  flex-direction: column;
  background: #272727;
  color: #c9cbd0;
  font-size: 6.200px;
`;

const Timeline = styled.div`
  flex: none;
  height: 11px;
  background: repeating-linear-gradient(90deg, transparent 0 52px, #4b4b4b 52px 53px);
`;

const Requests = styled.div`
  width: 124px;
  border-right: 1px solid #474747;
`;

const RequestRow = styled.div<{ $on?: boolean }>`
  height: ${p => (p.$on ? 11 : 14)}px;
  line-height: ${p => (p.$on ? 11 : 14)}px;
  padding-left: 2px;
  background: ${p => (p.$on ? '#454545' : '#303030')};
`;

const Tabs = styled.div`
  height: 14px;
  display: flex;
  align-items: center;
  gap: 10px;
  padding-left: 7px;
  background: #3b3b3b;
`;

const Tab = styled.span<{ $on?: boolean }>`
  height: 14px;
  line-height: 13px;
  color: ${p => (p.$on ? '#8ab8f8' : '#c9cbd0')};
  border-bottom: ${p => (p.$on ? '1px solid #8ab8f8' : '0')};
`;

const Code = styled.div`
  flex: 1;
  padding: 4px 3px 0 5px;
  border-right: 4px solid #8b8b8b;
  font-family: ${MONO};
  font-size: 5.050px;
  line-height: 8.150px;
  overflow: hidden;
`;

const CodeLine = styled.div<{ $d: number }>`
  height: 8.150px;
  padding-left: ${p => p.$d}px;
  overflow: hidden;
`;

const Mark = styled.mark`
  background: #a8c7fa;
  color: #24406b;
`;

const json: [string, string, string][] = [
  ['automaticSettlementOfIncome', 'true', '#9a7fd5'], ['buyCommission', '"10,5,3"', '#5cc0d0'],
  ['buyCommissionMaturitySettlement', 'false', '#9a7fd5'], ['completedDocument', '"测试"', '#5cc0d0'],
  ['createdAt', '"2025-04-16 01:39:39"', '#5cc0d0'], ['cycle', '2', '#9a7fd5'], ['dailyYield', '"5"', '#5cc0d0'],
  ['departmentId', 'null', '#6f6f6f'], ['detail', 'null', '#6f6f6f'], ['frequency', '5', '#9a7fd5'],
  ['incomeCommission', '"10,5,3"', '#5cc0d0'], ['incomeCommissionMaturitySettlement', 'false', '#9a7fd5'],
  ['investId', '"01JRY40XR76FJT50GCWCKC0PXR"', '#5cc0d0'], ['isDisplay', 'true', '#9a7fd5'], ['levelId', 'null', '#6f6f6f'],
  ['maxHoldShares', '1000', '#9a7fd5'], ['maxPayShare', '100', '#9a7fd5'], ['minPayShare', '1', '#9a7fd5'],
  ['noDocumentaryStarted', '"测试"', '#5cc0d0'], ['pictures', '"https://upload.xin/lx/admin/20250416/file-174', '#5cc0d0'],
  ['projectName', '"测试"', '#5cc0d0'], ['rejectionOfTheExpiration', 'true', '#9a7fd5'], ['remark', '"测试"', '#5cc0d0'],
  ['settlementMethod', '"dailyClosing"', '#5cc0d0'], ['share', '100000', '#9a7fd5'], ['shareProgress', '30', '#9a7fd5'],
  ['startTime', '"2025-04-16 01:39:38"', '#5cc0d0'], ['status', '"InProgress"', '#5cc0d0'],
];

const Inspector = () => (
  <PhotoShell $first>
    <Photo $first $h={286}>
      <Split>
        <ListPane>
          <ListCard>
            <Line $h={16} $mb={19.5} $gap={6.5}><Btn $w={28} $h={16} $c="#409eff">搜索</Btn><Btn $w={30} $h={16}>重置</Btn></Line>
            <Grid $w={254} $cols="28px 41px 41px 52px 40px 52px" $rows="32px 63px">
              <Cell $head>结算方<br />式</Cell><Cell $head>单价</Cell><Cell $head>日收益<br />率</Cell><Cell $head>周期(天)</Cell>
              <Cell $head><Line $h={8} $ml={30}>进</Line></Cell><Cell $head $shadow>操作</Cell>
              <Cell>每日结<br />算</Cell><Cell>10</Cell><Cell>500.000<br />0%</Cell><Cell>2</Cell><Cell><Progress>30</Progress></Cell>
              <Cell $shadow><Stack $gap={5.3}><Btn $w={39} $h={12} $c="#409eff">查看</Btn><Btn $w={39} $h={12} $c="#e6a23c">编辑</Btn><Btn $w={39} $h={12} $c="#f56c6c">删除</Btn></Stack></Cell>
            </Grid>
            <Line $h={37} $ml={23} $gap={6}>
              共 1 条<Line $h={16.5}><Box $w={65} $dark>10条/页<Chevron /></Box></Line>
              <Square>‹</Square><Square $on>1</Square><Square>›</Square><span>&nbsp;前往</span><Line $h={16.5}><Box $w={28} $dark>&nbsp; 1</Box></Line>页
            </Line>
          </ListCard>
        </ListPane>
        <DevTools>
          <Timeline />
          <Split $h={275}>
            <Requests>
              <RequestRow>名称</RequestRow>
              <RequestRow $on><Tint $c="#e8824a">{'{}'}</Tint> list?projectName=&amp;settlementMet...</RequestRow>
            </Requests>
            <Col $w={216}>
              <Tabs><Tab>✕</Tab><Tab>标头</Tab><Tab>载荷</Tab><Tab $on>预览</Tab><Tab>响应</Tab><Tab>启动器</Tab><Tab>时间</Tab></Tabs>
              <Code>
                <CodeLine $d={0}>▾{'{data: {,…}, status: 0, message: "获取第1页数据成功", timestamp'}</CodeLine>
                <CodeLine $d={6}>▾<Tint $c="#7cacf8">data</Tint>{': {,…}'}</CodeLine>
                <CodeLine $d={12}>▾<Tint $c="#7cacf8">list</Tint>{': [{investId: "01JRY40XR76FJT50GCWCKC0PXR", settlementMe'}</CodeLine>
                <CodeLine $d={18}>▾<Tint $c="#7cacf8">0</Tint>{': {investId: "01JRY40XR76FJT50GCWCKC0PXR", settlementMeth'}</CodeLine>
                {json.map(([k, v, c]) => (
                  <CodeLine key={k} $d={31}>
                    {k === 'dailyYield' ? <Mark>{k}</Mark> : <Tint $c="#6f9be0">{k}</Tint>}: <Tint $c={c}>{v}</Tint>
                  </CodeLine>
                ))}
              </Code>
            </Col>
          </Split>
        </DevTools>
      </Split>
    </Photo>
  </PhotoShell>
);

/* ---------- project detail attachment ---------- */

const Dialog = styled.div`
  width: 607px;
  height: 422px;
  padding: 0 8px 0 5px;
  background: #fff;
  font-size: 7.200px;
  color: #55585d;
`;

const DialogSide = styled.div`
  width: 9px;
  padding-top: 138px;
  background: #77797b;
  overflow: hidden;
  color: #45474a;
`;

const Tag = styled.span<{ $ok?: boolean }>`
  padding: 0 5px;
  height: 12.500px;
  line-height: 12px;
  border-radius: 1.500px;
  font-size: 6.400px;
  color: ${p => (p.$ok ? '#67c23a' : '#909399')};
  background: ${p => (p.$ok ? '#eef8e8' : '#f2f2f4')};
`;

const Thumbnail = styled.div`
  width: 52px;
  height: 51px;
  padding-top: 4px;
  overflow: hidden;
  background: #f5f7fa;
  text-align: center;
  font-size: 4.500px;
  line-height: 7px;
  b { display: block; font-size: 7.500px; line-height: 16px; color: #252b3a; }
  small { display: block; font-size: 3.600px; }
`;

const details: React.ReactNode[][] = [
  ['投资ID', '01JRY40XR76FJT50GCWCKC0PXR', '项目名称', '测试'],
  ['结算方式', '每日结算', '项目状态', <Tag key="t" $ok>进行中</Tag>],
  ['项目图片', <Thumbnail key="p">Macys<small>单号: order-1844493556618223</small><b>8855.15</b><Tint $c="#e6953c">●</Tint> 92.98</Thumbnail>, '项目份额', '100000'],
  ['已售份额', '30', '单价', '10'],
  ['日收益率', '500.0000%', '周期(天)', '2'],
  ['单次最小买入份额', '1', '单次最大买入份额', '100'],
  ['最大持有份额', '1000', '限制投资次数', '5'],
  ['买入佣金比例', '10,5,3', '收益佣金比例', '10,5,3'],
  ['是否自动结算收益', <Tag key="t" $ok>是</Tag>, '是否到期反本金', <Tag key="u" $ok>是</Tag>],
  ['买入佣金是否到期结算', <Tag key="t">否</Tag>, '收益佣金是否到期结算', <Tag key="u">否</Tag>],
  ['前端是否显示', <Tag key="t" $ok>是</Tag>, '关联等级', '无'],
  ['关联部门', '无', '开始时间', '2025-04-16 01:39:38'],
  ['项目未开始报错文案', '测试', '项目已完成报错文案', '测试'],
  ['备注', '测试'],
  ['项目详情', '无'],
];

const DialogTitle = styled.div`
  height: 31px;
  display: flex;
  justify-content: space-between;
  font-size: 9.300px;
  line-height: 13px;
  color: #303133;
  span { font-size: 8px; line-height: 8px; color: #909399; }
`;

const DialogActions = styled.div`
  display: flex;
  justify-content: flex-end;
  gap: 6px;
  padding-top: 18px;
`;

const ProjectDetail = () => (
  <PhotoShell>
    <Photo $h={422}>
      <Split>
        <Dialog>
          <DialogTitle>投资项目详情<span>✕</span></DialogTitle>
          <Grid $w={594} $cols="132px 206px 132px 124px" $rows="20px 21.700px 63px 21px 20.300px 20.700px 20.300px 20px 21.700px 21px 21px 20.300px 20.700px 20px 20.700px">
            {details.map(row =>
              row.map((c, i) => (
                <Cell key={`${row[0]}${i}`} $left $head={i % 2 === 0} $bg={i % 2 === 0} $span={row.length === 2 && i === 1 ? 3 : 1}>{c}</Cell>
              )),
            )}
          </Grid>
          <DialogActions><Btn $w={31} $h={16.5}>关闭</Btn><Btn $w={31} $h={16.5} $c="#e6a23c">编辑</Btn></DialogActions>
        </Dialog>
        <DialogSide>00</DialogSide>
      </Split>
    </Photo>
  </PhotoShell>
);

/* ---------- letterboxed attachments ---------- */

const Letterbox = styled.div<{ $top: number; $bottom: number; $bg: string; $bg2?: string }>`
  height: 200px;
  display: grid;
  grid-template-rows: ${p => p.$top}px minmax(0, 1fr) ${p => p.$bottom}px;
  &::before { content: ''; background: ${p => p.$bg}; }
  &::after { content: ''; background: ${p => p.$bg2 || p.$bg}; }
`;

const RateStrip = styled.div`
  display: flex;
  align-items: center;
  padding-left: 55px;
  background: #fff;
  font-size: 16px;
  b { font-size: 15.800px; margin-right: 14px; }
`;

const Stepper = styled.div`
  width: 172px;
  height: 36px;
  margin-right: 10px;
  display: grid;
  grid-template-columns: 36px 1fr 37px;
  line-height: 34px;
  text-align: center;
  border: 1px solid #66b1ff;
  border-radius: 4px;
  overflow: hidden;
  span:nth-child(odd) { background: #f5f7fa; font-size: 19px; color: #777; }
  span:nth-child(2) { border: solid #dcdfe6; border-width: 0 1px; }
`;

const RouteStrip = styled.div`
  background: #fafafa;
  padding: 3px 35px 0 12px;
`;

const RouteTitle = styled.div`
  height: 17.500px;
  display: flex;
  align-items: center;
  justify-content: space-between;
  padding: 0 12px 0 4px;
  border-bottom: 1px solid #dedede;
  font-size: 9.500px;
  font-weight: 700;
  color: #3b4151;
  mark { background: #ff0; color: #3b4151; }
`;

const RouteBox = styled.div`
  margin-top: 1.500px;
  height: 17.500px;
  display: flex;
  align-items: center;
  border: 1px solid #b4d4f6;
  border-radius: 2px;
  background: #ebf3fb;
`;

const RouteInner = styled.div`
  flex: 1;
  height: 14px;
  display: flex;
  align-items: center;
  gap: 4px;
  margin: 0 5px 0 0.500px;
  border: 1px solid #6b747d;
  font: 700 5.500px ${MONO};
  color: #3b4151;
  mark { background: #ff9632; }
  small { font-weight: 400; font-size: 5.100px; }
`;

const Method = styled.span`
  width: 31px;
  height: 12px;
  line-height: 12px;
  text-align: center;
  color: #fff;
  background: #61affe;
`;

const AdminBody = styled.div`
  display: flex;
  overflow: hidden;
  background: #f0f1f6;
`;

const SideNav = styled.nav<{ $blue?: boolean }>`
  flex: none;
  width: ${p => (p.$blue ? 65.5 : 91)}px;
  padding-top: 3px;
  background: ${p => (p.$blue ? '#2f80e8' : '#fff')};
  border-right: ${p => (p.$blue ? '0' : '3px solid #d9dade')};
  color: ${p => (p.$blue ? '#bcd9fb' : '#606266')};
`;

const NavItem = styled.div<{ $h: number; $pad: number; $on?: boolean; $bold?: boolean }>`
  height: ${p => p.$h}px;
  padding: 0 6px 0 ${p => p.$pad}px;
  display: flex;
  align-items: center;
  gap: 3px;
  font-weight: ${p => (p.$bold ? 700 : 400)};
  color: ${p => (p.$on ? '#fff' : 'inherit')};
  background: ${p => (p.$on && !p.$bold ? 'linear-gradient(#fff 2px, #409eff 2px 21px, #fff 21px)' : 'none')};
`;

const NavIcon = ({ d, c = '#606266', solid }: { d: string; c?: string; solid?: boolean }) => (
  <svg width="7" height="7" viewBox="0 0 10 10" fill={solid ? c : 'none'} stroke={c} strokeWidth="1.200"><path d={d} /></svg>
);
const person = 'M3 3a2 2 0 104 0 2 2 0 10-4 0M1 9Q1 6 5 6T9 9Z';
const bag = 'M1 3H9V9H1ZM3 1H7';

const OrdersCard = styled.div`
  flex: 1;
  margin: 6px 0 0 12px;
  padding: 7px 0 0 7px;
  border-radius: 3px 0 0 0;
  background: #fff;
`;

const MerchantInfo = styled.div`
  text-align: left;
  line-height: 12.200px;
  padding-left: 2px;
`;

const Orders = () => (
  <AdminBody>
    <SideNav>
      <NavItem $h={22.5} $pad={7}><NavIcon d={person} solid />用户列表</NavItem>
      <NavItem $h={22.5} $pad={7}><NavIcon d={bag} />充值管理<Spacer /><Chevron up s={4} /></NavItem>
      <NavItem $h={22.5} $pad={16} $on><NavIcon d="M1 1H9V9H1ZM1 4H9" c="#fff" />账单流水</NavItem>
      <NavItem $h={22.5} $pad={16}><NavIcon d={bag} />充值列表</NavItem>
      <NavItem $h={22.5} $pad={7}><NavIcon d="M1 3H9V9H1ZM4 3V1H7V3" solid />账户列表</NavItem>
      <NavItem $h={22.5} $pad={7}><NavIcon d="M2 3H8V10H2ZM4 3V1H6V3M5 5V8" />币种管理</NavItem>
      <NavItem $h={22.5} $pad={7}><NavIcon d="M1 3H7V10H1ZM3 3V1H9V8H7" />投资管理<Spacer /><Chevron s={4} /></NavItem>
      <NavItem $h={22.5} $pad={7}><NavIcon d={bag} />产品列表</NavItem>
    </SideNav>
    <OrdersCard>
      <Line $h={14} $mb={8}><Btn $w={39.5} $h={14} $c="#409eff">模拟充值</Btn></Line>
      <Line $h={14.3} $mb={17} $gap={5}>
        <b>订单ID</b><Box $w={89}>请输入订单ID</Box><Label $w={5} /><b>用户账号</b><Box $w={90}>请输入用户账号</Box><Label $w={4} />
        <b>订单状态</b><Box $w={67}>请选择订单状态<Chevron /></Box><Label $w={4} /><Btn $w={27} $h={14.3} $c="#409eff">搜索</Btn><Btn $w={27} $h={14.3}>重置</Btn>
      </Line>
      <Grid $w={526} $cols="81px 68px 108.500px 45px 44.500px 68px 82px 29px" $rows="17px 62px 62px">
        {['订单ID', '用户ID', '商户信息', '充值金额', '到账金额', '支付账号', '支付平台订单号', ''].map((t, i) => <Cell $head key={i}>{t}</Cell>)}
        {[0, 1].map(i => (
          <React.Fragment key={i}>
            <Cell>{i ? '' : 'P29860923486766096'}</Cell>
            <Cell>UID1909372555261<br />77</Cell>
            <Cell $left><MerchantInfo>ID:cm98khaot0001sapzfjreqi73<br />名称:test<br />账号:test<br />手续费:0</MerchantInfo></Cell>
            <Cell>{i ? '' : '1000'}</Cell><Cell>{i ? '' : '12726.17'}</Cell><Cell>{i ? '' : '无'}</Cell><Cell>{i ? '' : '无'}</Cell><Cell />
          </React.Fragment>
        ))}
      </Grid>
    </OrdersCard>
  </AdminBody>
);

const Recharge = styled.div`
  flex: 1;
  padding-left: 7.500px;
  background: #fff;
  font-size: 5.600px;
`;

const Stubs = styled.div`
  height: 1px;
  margin: 0 0 9.500px 273px;
  width: 58px;
  background: linear-gradient(90deg, #1890ff 26px, transparent 26px 32px, #f04848 32px);
`;

const MiniTag = styled.span<{ $c: string; $bg: string }>`
  padding: 0 2px;
  line-height: 9px;
  border-radius: 1px;
  color: ${p => p.$c};
  background: ${p => p.$bg};
`;

const Loose = styled.div<{ $left?: boolean }>`
  line-height: 8.500px;
  text-align: ${p => (p.$left ? 'left' : 'center')};
  margin-left: ${p => (p.$left ? '-2px' : '0')};
`;

const RechargeSum = styled.span`
  font-size: 6.600px;
`;

const Recharges = () => (
  <AdminBody>
    <SideNav $blue>
      <NavItem $h={16.5} $pad={8} $on $bold><NavIcon d={person} c="#fff" solid />用户管理<Spacer /><Chevron up s={4} c="#9cc6f8" /></NavItem>
      {['用户列表', '等级管理', '提现列表', '充值列表', '代付列表', '账单列表', '饲养账户更变记录'].map((t, i) => (
        <NavItem key={t} $h={14.5} $pad={14.5} $bold={i === 3} $on={i === 3}>{t}</NavItem>
      ))}
    </SideNav>
    <Recharge>
      <Stubs />
      <Line $h={9} $mb={2.5} $gap={4}><Tint $c="#d0443e"><RechargeSum>本页订单金额：Kz 10,000</RechargeSum></Tint><span>(支付成功: Kz 10,000, 代收手续费: Kz 0)</span></Line>
      <Grid $w={543} $cols="44px 59px 139px 140px 74px 55px 32px" $rows="15.500px 41px">
        <Cell $head $bg>商户/单号</Cell><Cell $head $bg>用户名</Cell><Cell $head $bg>支付方式</Cell><Cell $head $bg $left>付款信息</Cell>
        <Cell $head $bg $left>充值金额</Cell><Cell $head $bg>充值状态</Cell><Cell $head $bg>充值时间</Cell>
        <Cell><Loose>1011905290633<br />847447553C<br /><MiniTag $c="#e03030" $bg="#e6f1fd">第19单</MiniTag></Loose></Cell>
        <Cell><Loose>13800000000 <MiniTag $c="#1888f5" $bg="#e2f0fe">内部</MiniTag><br /><Tint $c="#2fb67c">代理: aaaaaa - 888889</Tint><br />继续账户</Loose></Cell>
        <Cell><Tint $c="#c6403c">RECHARGE_BACK</Tint></Cell>
        <Cell $left><Loose $left>类型: 后台充值<br />汇率: <Tint $c="#e03030">1</Tint></Loose></Cell>
        <Cell $left><Loose $left>Kz 10,000<br /><Tint $c="#e03030">扣款: Kz 0</Tint><br />之前: Kz 477,411.73<br />之后: Kz 487,411.73</Loose></Cell>
        <Cell><Loose><MiniTag $c="#2fb67c" $bg="#dff5ea">已支付</MiniTag><br />2025-03-27 16:07:40</Loose></Cell>
        <Cell><Loose>2025-03-27<br />16:07:40</Loose></Cell>
      </Grid>
      <Line $h={57} $ml={199} $gap={6}>
        共 1 条<Box $w={36} $h={10} $dark>20条/页</Box><span>‹ &nbsp; &nbsp;</span><Tint $c="#1888f5" $b>1</Tint><span>&nbsp; &nbsp; › &nbsp; &nbsp;前往</span><Box $w={15} $h={10} $dark>1</Box>页
      </Line>
    </Recharge>
  </AdminBody>
);

/* ---------- page ---------- */

export default function App() {
  return (
    <Viewport>
      <Global />
      <Window>
        <TitleBar>
          <svg width="21" height="21" stroke="#a3a3a3" strokeWidth="2.500"><path d="M0 17H21" /></svg>
          <svg width="23" height="21" fill="none" stroke="#a3a3a3" strokeWidth="2"><rect x="1" y="1" width="21" height="19" rx="2" /></svg>
          <svg width="19" height="20" fill="none" stroke="#999" strokeWidth="2"><path d="M1 1L18 18.500M18 1L1 18.500" /></svg>
        </TitleBar>
        <Header>
          <BackSlot>
            <svg width="31" height="30" fill="none" stroke="#a0a0a0" strokeWidth="2.200"><path d="M30 15H1.500M15.500 1L1.500 15L15.500 29" /></svg>
            <UnreadBadge>..75</UnreadBadge>
          </BackSlot>
          <Avatar>网全</Avatar>
          <Peer>
            <PeerName>网站开发 二开维护 软件...</PeerName>
            <PeerStatus>last seen recently</PeerStatus>
          </Peer>
          <HeaderIcons>
            <svg width="33" height="33" fill="none" stroke="#999" strokeWidth="3"><circle cx="13" cy="13" r="11.500" /><path d="M21 21L31.500 31.500" /></svg>
            <svg width="33" height="33" viewBox="0 0 33 33" fill="#999"><path d="M5 .5Q8-.5 9.500 3L11 8Q11.500 10 8.500 13.500Q12 20.500 19 24.500Q22 21.500 24.500 21.700L30 23.500Q33 24.500 32.500 28Q31.500 32.500 27 32.500Q16 31.500 8.500 23.500Q1 15.500.5 6Q.5 1.500 5 .5Z" /></svg>
            <svg width="8" height="33" fill="#999"><circle cx="4" cy="4" r="4" /><circle cx="4" cy="16" r="4" /><circle cx="4" cy="28" r="4" /></svg>
          </HeaderIcons>
        </Header>

        <Chat>
          <ChatWallpaper />
          <History>
            <Group>
              <Message first time="7:31"><Emoji />估计没有 这两天有点忙</Message>
              <Message last time="7:32">你这两天有事回去？</Message>
            </Group>
            <Group $out><Message out time="7:32">明天回</Message></Group>
            <Group><Message first last wide wrapTime time="7:32">可以 没事 那你好好休息 这几天我在写接口给你</Message></Group>
            <Group $out><Message out time="7:32">okok</Message></Group>
            <Group><Message first last wide time="7:34">{'如果你有时间 我看看 你可以先搞点界面 我后面提\n供给你接口你直接接上去即可'}</Message></Group>
            <Group $out><Message out time="7:34">好</Message></Group>
            <Group><Message first last time="7:34">我看看 下个接口做啥</Message></Group>
            <Group>
              <Message first wide time="7:53" media={<Stack $gap={6}><LevelForm /><MemberForm /></Stack>}>
                {'做个公告的模块\n指定某个语言 （必填）\n可以选择推送的等级（选填）\n或者可以选择部分会员 （选填）\n然后可以选择指定的查看时间（选填）\n\n然后有个标题（必填）\n简介（选填）\n内容（html输入框）\n排序'}
              </Message>
              <Message time="7:53">差不多就这样吧</Message>
              <Message last time="7:53">你有时间就先做做</Message>
            </Group>
            <Group $out><Message out time="7:53">收到</Message></Group>
            <Group>
              <Inspector />
              <Message time="9:41">这个列表的收益率</Message>
              <Message time="9:41">显示不对</Message>
              <Message time="9:41">应该是5%你好像×100了</Message>
              <ProjectDetail />
              <PhotoShell>
                <Photo $h={200}>
                  <Letterbox $top={72} $bottom={74} $bg="linear-gradient(90deg, #c9c9c9, #c2c2c2 30%, #cdcdcd 75%)">
                    <RateStrip><b>日收益率</b><Stepper><span>−</span><span>5.0000</span><span>+</span></Stepper>%</RateStrip>
                  </Letterbox>
                </Photo>
              </PhotoShell>
              <Message time="9:42">按照接口的返回即可 后面+%</Message>
              <Message last time="9:42">不用额外计算</Message>
            </Group>
            <Group>
              <Message
                first last wide time="20:59"
                media={
                  <Photo $inset $first $h={200}>
                    <Letterbox $top={74} $bottom={74} $bg="linear-gradient(#cfcfcf, #bdbdbd)" $bg2="linear-gradient(#bdbdbd, #cacaca)">
                      <RouteStrip>
                        <RouteTitle><span>后台<mark>账单</mark>流水</span><Chevron up s={7} c="#333" /></RouteTitle>
                        <RouteBox>
                          <RouteInner><Method>GET</Method>/admin/transaction/list <small>获取<mark>账单</mark>流水列表</small></RouteInner>
                          <svg width="7" height="9" viewBox="0 0 7 9" fill="#777"><path d="M1 4H6V9H1ZM2 4V1.500H5V3H4V2.500H3V4Z" /></svg>
                          <Line $h={8} $ml={3} $gap={4}><Chevron s={8} c="#333" /><i /></Line>
                        </RouteBox>
                      </RouteStrip>
                    </Letterbox>
                  </Photo>
                }
              >
                好像缺了这个路由
              </Message>
            </Group>
            <Group $out><Message out time="21:00">我看下</Message></Group>
            <Group>
              <PhotoShell $first>
                <Photo $first $h={200}>
                  <Letterbox $top={14} $bottom={14} $bg="linear-gradient(90deg, #c8c8c8, #bdbdbd 18%, #cacaca 30%, #c4c4c4 60%, #c9c9c9)">
                    <Orders />
                  </Letterbox>
                </Photo>
              </PhotoShell>
              <Message time="21:00">充值管理的这两个重复了</Message>
              <Message wide time="21:00">{'账单流水应该是跟账户列表放在一块 因为这个是\n全局的所有订单存放'}</Message>
              <PhotoShell>
                <Photo $h={200}>
                  <Letterbox $top={38} $bottom={40} $bg="linear-gradient(90deg, #cfc8c4, #c9c2cb 30%, #cccbcc 45%, #cdcdcd)">
                    <Recharges />
                  </Letterbox>
                  <PhotoTime>21:01</PhotoTime>
                </Photo>
              </PhotoShell>
              <Message time="21:02">可以统一在用户管理下面</Message>
              <Message last time="21:02">这些都跟用户操作有关的</Message>
            </Group>
            <Group $out><Message out time="21:02">好</Message></Group>
          </History>
          <Track><Thumb /></Track>
        </Chat>

        <Composer>
          <svg width="38" height="44" viewBox="0 0 38 44" fill="none" stroke="#999" strokeWidth="3" strokeLinecap="round"><path d="M2 16L8 8C14-1 28 0 34 8C37 13 36 18 33 22L21 38C16 44 7 43 3 37C1 33 1 29 4 25L18 10C22 6 29 11 26 17L14 31" /></svg>
          <Placeholder>Write a message...</Placeholder>
          <svg width="44" height="44" fill="none" stroke="#999" strokeWidth="3"><circle cx="22" cy="22" r="20.500" /><path d="M13 27Q22 37 31 27" strokeLinecap="round" /><circle cx="15" cy="18.500" r="2.800" fill="#999" stroke="none" /><circle cx="29" cy="18.500" r="2.800" fill="#999" stroke="none" /></svg>
          <Line $h={46} $ml={48}>
            <svg width="36" height="46" fill="none" stroke="#999" strokeWidth="3" strokeLinecap="round"><rect x="10" y="1.500" width="16" height="28" rx="8" /><path d="M2 22Q3 37 18 37Q33 37 34 22M18 37V44" /></svg>
          </Line>
        </Composer>
      </Window>
    </Viewport>
  );
}
